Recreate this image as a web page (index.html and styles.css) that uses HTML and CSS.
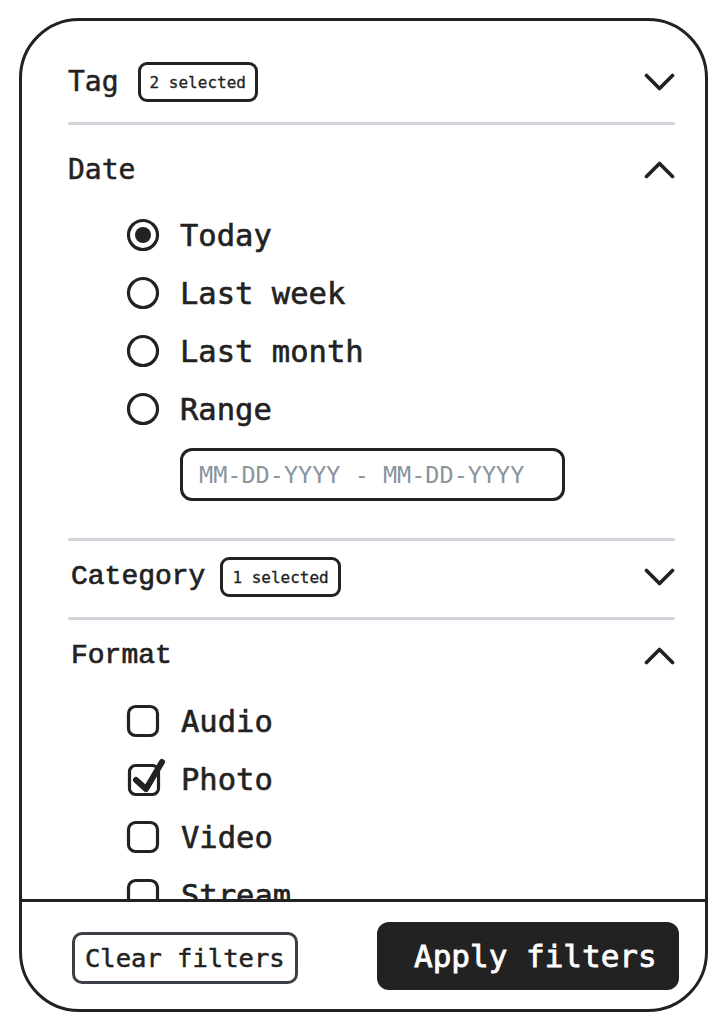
FILE: index.html
```html
<!DOCTYPE html>
<html lang="en">
<head>
<meta charset="utf-8">
<title>Filters</title>
<link rel="stylesheet" href="styles.css">
</head>
<body>
<div class="card">
  <div class="card-body">
    <section class="section section--collapsed">
      <div class="section-head">
        <div class="head-title"><span class="title">Tag</span><span class="badge">2 selected</span></div>
        <svg class="chev" width="31" height="18" viewBox="0 0 31 18"><path d="M2.5 2.5 L15.5 15.5 L28.5 2.5"/></svg>
      </div>
    </section>
    <hr class="divider">
    <section class="section section--date">
      <div class="section-head">
        <div class="head-title"><span class="title">Date</span></div>
        <svg class="chev" width="31" height="18" viewBox="0 0 31 18"><path d="M2.5 15.5 L15.5 2.5 L28.5 15.5"/></svg>
      </div>
      <ul class="options">
        <li class="option"><svg class="ctrl" width="32" height="32" viewBox="0 0 32 32"><circle class="ring" cx="16" cy="16" r="14.5"/><circle class="dot" cx="16" cy="16" r="8"/></svg><span>Today</span></li>
        <li class="option"><svg class="ctrl" width="32" height="32" viewBox="0 0 32 32"><circle class="ring" cx="16" cy="16" r="14.5"/></svg><span>Last week</span></li>
        <li class="option"><svg class="ctrl" width="32" height="32" viewBox="0 0 32 32"><circle class="ring" cx="16" cy="16" r="14.5"/></svg><span>Last month</span></li>
        <li class="option"><svg class="ctrl" width="32" height="32" viewBox="0 0 32 32"><circle class="ring" cx="16" cy="16" r="14.5"/></svg><span>Range</span></li>
      </ul>
      <input class="range-input" type="text" placeholder="MM-DD-YYYY - MM-DD-YYYY">
    </section>
    <hr class="divider">
    <section class="section section--collapsed">
      <div class="section-head">
        <div class="head-title"><span class="title title--alt">Category</span><span class="badge badge--tight">1 selected</span></div>
        <svg class="chev" width="31" height="18" viewBox="0 0 31 18"><path d="M2.5 2.5 L15.5 15.5 L28.5 2.5"/></svg>
      </div>
    </section>
    <hr class="divider">
    <section class="section">
      <div class="section-head">
        <div class="head-title"><span class="title title--alt">Format</span></div>
        <svg class="chev" width="31" height="18" viewBox="0 0 31 18"><path d="M2.5 15.5 L15.5 2.5 L28.5 15.5"/></svg>
      </div>
      <ul class="options">
        <li class="option option--check"><svg class="ctrl" width="32" height="32" viewBox="0 0 32 32"><rect class="box" x="1.5" y="1.5" width="29" height="29" rx="7"/></svg><span>Audio</span></li>
        <li class="option option--check"><svg class="ctrl" width="32" height="32" viewBox="0 0 32 32"><rect class="box" x="2.5" y="2.5" width="29" height="29" rx="6"/><path class="tick" d="M9 17 L19 26 L35 -1"/></svg><span>Photo</span></li>
        <li class="option option--check"><svg class="ctrl" width="32" height="32" viewBox="0 0 32 32"><rect class="box" x="1.5" y="1.5" width="29" height="29" rx="7"/></svg><span>Video</span></li>
        <li class="option option--check"><svg class="ctrl" width="32" height="32" viewBox="0 0 32 32"><rect class="box" x="1.5" y="1.5" width="29" height="29" rx="7"/></svg><span>Stream</span></li>
      </ul>
    </section>
  </div>
  <footer class="card-footer">
    <button class="btn btn-clear" type="button">Clear filters</button>
    <button class="btn btn-apply" type="button">Apply filters</button>
  </footer>
</div>
</body>
</html>
```

FILE: styles.css
```css
* {
  box-sizing: border-box;
}

body {
  margin: 0;
  background: #ffffff;
  color: #222222;
  font-family: "DejaVu Sans Mono", "Liberation Mono", monospace;
}

.card {
  margin: 18px 0 0 19px;
  width: 689px;
  height: 994px;
  border: 3px solid #222222;
  border-radius: 60px;
  overflow: hidden;
  display: flex;
  flex-direction: column;
  background: #ffffff;
}

.card-body {
  flex: none;
  height: 878px;
  overflow: hidden;
  padding: 25px 30px 0 46px;
}

.section--collapsed {
  padding-bottom: 4px;
}

.section--date {
  padding-top: 9px;
}

.section-head {
  height: 72px;
  display: flex;
  align-items: center;
  justify-content: space-between;
}

.head-title {
  display: flex;
  align-items: center;
}

.title {
  font-size: 28px;
  line-height: 1.2;
  -webkit-text-stroke: 0.5px #222222;
}

.title--alt {
  margin-left: 3px;
  font-family: "Liberation Mono", monospace;
  -webkit-text-stroke: 0.7px #222222;
}

.badge {
  margin-left: 19px;
  height: 40px;
  padding: 0 9px;
  border: 3px solid #222222;
  border-radius: 9px;
  display: inline-flex;
  align-items: center;
  font-size: 16px;
  -webkit-text-stroke: 0.3px #222222;
}

.badge--tight {
  margin-left: 15px;
}

.chev {
  display: block;
  fill: none;
  stroke: #222222;
  stroke-width: 3.7;
  stroke-linecap: round;
  stroke-linejoin: round;
}

.divider {
  margin: 0;
  border: 0;
  height: 3px;
  background: #d1d5db;
  border-radius: 2px;
}

.options {
  list-style: none;
  margin: 0 0 0 59px;
  padding: 0;
}

.option {
  height: 58px;
  display: flex;
  align-items: center;
  gap: 21px;
  font-size: 30.5px;
  -webkit-text-stroke: 0.6px #222222;
}

.option--check {
  gap: 22px;
}

.ctrl {
  flex: none;
  display: block;
  overflow: visible;
}

.ring {
  fill: none;
  stroke: #222222;
  stroke-width: 3.2;
}

.dot {
  fill: #222222;
}

.box {
  fill: none;
  stroke: #222222;
  stroke-width: 3.2;
}

.tick {
  fill: none;
  stroke: #222222;
  stroke-width: 6;
  stroke-linecap: round;
  stroke-linejoin: round;
}

.range-input {
  display: block;
  margin: 10px 0 37px 112px;
  width: 385px;
  height: 53px;
  border: 3px solid #222222;
  border-radius: 12px;
  padding: 0 16px;
  font-family: "DejaVu Sans Mono", monospace;
  font-size: 23.5px;
  color: #222222;
  background: #ffffff;
  outline: none;
}

.range-input::placeholder {
  color: #8b949e;
}

.card-footer {
  flex: 1;
  border-top: 3px solid #222222;
  display: flex;
  align-items: center;
  justify-content: space-between;
  padding: 0 26px 0 50px;
}

.btn {
  font-family: "DejaVu Sans Mono", monospace;
  cursor: pointer;
}

.btn-clear {
  margin-top: 4px;
  height: 52px;
  padding: 0 10px;
  border: 3px solid #3b3f46;
  border-radius: 10px;
  background: #ffffff;
  color: #222222;
  font-size: 25.5px;
  -webkit-text-stroke: 0.5px #222222;
}

.btn-apply {
  width: 302px;
  height: 68px;
  padding: 0 20px 0 37px;
  border: 0;
  border-radius: 12px;
  background: #222222;
  color: #ffffff;
  font-size: 31px;
  text-align: left;
  white-space: nowrap;
  -webkit-text-stroke: 0.8px #ffffff;
}
```
